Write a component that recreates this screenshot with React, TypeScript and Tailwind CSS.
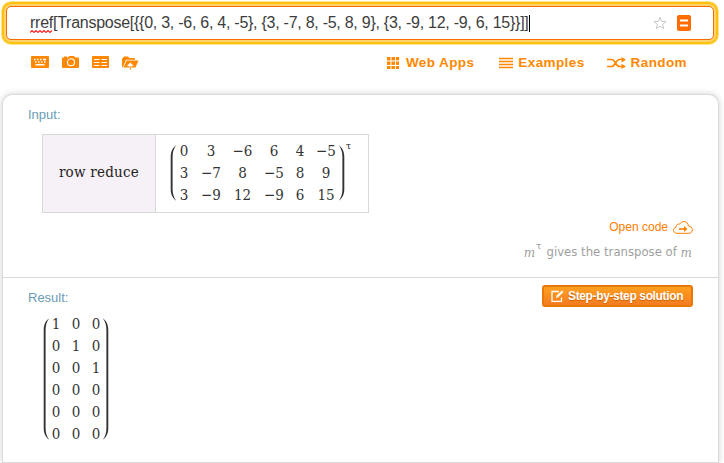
import React from "react";

const ORANGE = "#ff8800";

const inputMatrix = [
  ["0", "3", "−6", "6", "4", "−5"],
  ["3", "−7", "8", "−5", "8", "9"],
  ["3", "−9", "12", "−9", "6", "15"],
];

const resultMatrix = [
  [1, 0, 0],
  [0, 1, 0],
  [0, 0, 1],
  [0, 0, 0],
  [0, 0, 0],
  [0, 0, 0],
];

const mathFont = "font-['DejaVu_Serif_Condensed','DejaVu_Serif',serif] [font-stretch:condensed]";

function Paren({ height, right = false }: { height: number; right?: boolean }) {
  const h = height;
  return (
    <svg width="7" height={h} viewBox={`0 0 7 ${h}`} className={right ? "shrink-0 -scale-x-100" : "shrink-0"}>
      <path
        d={`M6.2 0.3C3 2.5 0.7 6 0.7 12V${h - 12}C0.7 ${h - 6} 3 ${h - 2.5} 6.2 ${h - 0.3}C3.8 ${h - 3.5} 2.6 ${h - 7} 2.6 ${h - 12}V12C2.6 7 3.8 3.5 6.2 0.3Z`}
        fill="#333"
      />
    </svg>
  );
}

function KeyboardIcon() {
  return (
    <svg width="18" height="12" viewBox="0 0 18 12">
      <rect width="18" height="12" rx="1" fill={ORANGE} />
      <path d="M3 3.500h1.500M6 3.500h1.500M9 3.500h1.500M12 3.500h3M4 6h1.500M7 6h1.500M10 6h1.500M13 6h1.500M4.500 8.700h9" stroke="#fff" strokeWidth="1.400" />
    </svg>
  );
}

function CameraIcon() {
  return (
    <svg width="17" height="12" viewBox="0 0 17 12">
      <path d="M1 1.500h1V.6h3v.9h1L7 0h5l1 1.500h3a1 1 0 0 1 1 1V11a1 1 0 0 1-1 1H1a1 1 0 0 1-1-1V2.500a1 1 0 0 1 1-1Z" fill={ORANGE} />
      <circle cx="9" cy="6.300" r="3.500" fill="none" stroke="#fff" strokeWidth="1.100" />
    </svg>
  );
}

function TableIcon() {
  return (
    <svg width="17" height="12" viewBox="0 0 17 12">
      <rect width="17" height="12" rx="1" fill={ORANGE} />
      <path d="M2 3.500h5.500M9.500 3.500H15M2 6.500h5.500M9.500 6.500H15M2 9.500h5.500M9.500 9.500H15" stroke="#fff" strokeWidth="1.200" />
    </svg>
  );
}

function UploadIcon() {
  return (
    <svg width="17" height="14" viewBox="0 0 17 14">
      <path d="M0 10.500V3L2 .5h4L7.500 2H13v1.700H4L.8 11.500Z" fill={ORANGE} />
      <path d="M4.700 4.500H16.500L13.500 11.500H1.500Z" fill={ORANGE} />
      <path d="M8.300 6.800l2.900 2.900H9.100V13.500H7.500V9.700H5.400Z" fill="#fff" stroke="#fff" strokeWidth=".6" />
      <path d="M7.700 10.500h1.200v3H7.700Z" fill={ORANGE} />
    </svg>
  );
}

function GridIcon() {
  return (
    <svg width="12" height="12" viewBox="0 0 12 12" fill={ORANGE}>
      {[0, 4.5, 9].map((y) => [0, 4.5, 9].map((x) => <rect key={`${x}-${y}`} x={x} y={y} width="3.500" height="3.400" />))}
    </svg>
  );
}

function ListIcon() {
  return (
    <svg width="14" height="12" viewBox="0 0 14 12">
      <path d="M0 1.500h14M0 4.500h14M0 7.500h14M0 10.500h14" stroke={ORANGE} strokeWidth="1.300" />
    </svg>
  );
}

function ShuffleIcon() {
  return (
    <svg width="19" height="12" viewBox="0 0 19 12">
      <path d="M0 2.500h4.500c4 0 4 7 8 7H15M0 9.500h4.500c4 0 4-7 8-7H15" fill="none" stroke={ORANGE} strokeWidth="1.600" />
      <path d="M14.500 0l4.500 2.700-4.500 2.800ZM14.500 6.700L19 9.500 14.500 12Z" fill={ORANGE} />
    </svg>
  );
}

export default function App() {
  return (
    <div className="h-[463px] w-[724px] overflow-hidden bg-white font-['Liberation_Sans',Arial,sans-serif]">
      <header className="h-[94px] pl-[6px] pt-[6px]">
        <div className="flex h-[34px] w-[708px] items-center rounded-[5px] border border-[#f96a00] bg-white pl-[23px] pr-[22px] shadow-[0_0_0_2px_#ffd36b,0_0_0_4px_#ffc20e,0_0_0_5px_#ffe592]">
          <div className="flex grow items-center whitespace-pre text-[16px] leading-[20px] tracking-[-0.26px] text-[#3d3d3d]">
            <span className="flex flex-col">
              rref
              <svg width="23" height="3" viewBox="0 0 23 3" className="-mt-[3px]">
                <path d="M0 2.500L2 .5l2 2 2-2 2 2 2-2 2 2 2-2 2 2 2-2 2 2 2-2" fill="none" stroke="#f22" strokeWidth="1.100" />
              </svg>
            </span>
            <span>{"[Transpose[{{0, 3, -6, 6, 4, -5}, {3, -7, 8, -5, 8, 9}, {3, -9, 12, -9, 6, 15}}]]"}</span>
            <span className="h-[17px] w-px bg-black" />
          </div>
          <svg width="14" height="14" viewBox="0 0 14 14" className="mr-[10px]">
            <path d="M7 1.200l1.600 4.200 4.400.2-3.400 2.800 1.100 4.200L7 10.300l-3.700 2.300 1.100-4.200L1 5.600l4.400-.2Z" fill="none" stroke="#c8c8c8" />
          </svg>
          <svg width="14" height="16" viewBox="0 0 14 16">
            <rect width="14" height="16" rx="2" fill="#ff6d00" />
            <path d="M3 5.500h8M3 10.500h8" stroke="#fff" strokeWidth="2" />
          </svg>
        </div>
        <nav className="mt-[13px] flex h-[20px] items-center pl-[25px] pr-[37px] text-[13.5px] font-bold tracking-[0.4px] text-[#ff8800]">
          <div className="flex items-start gap-[13px]">
            <KeyboardIcon /><CameraIcon /><TableIcon /><UploadIcon />
          </div>
          <div className="ml-auto flex items-center">
            <GridIcon /><span className="ml-[7px]">Web Apps</span>
            <span className="ml-[25px]"><ListIcon /></span><span className="ml-[5px]">Examples</span>
            <span className="ml-[22px]"><ShuffleIcon /></span><span className="ml-[5px]">Random</span>
          </div>
        </nav>
      </header>

      <main className="ml-[2px] h-[369px] w-[717px] rounded-t-[10px] border-x border-t border-[#dadada] bg-white shadow-[0_0_7px_rgba(0,0,0,0.18)]">
        <section className="h-[183px] border-b border-[#dadada] pl-[25px] pr-[25px] pt-[12px]">
          <h2 className="h-[16px] text-[13px] leading-[16px] text-[#6b9cb5]">Input:</h2>
          <div className="ml-[14px] mt-[11px] flex h-[79px] w-[327px] border border-[#d8d8d8]">
            <div className={`flex w-[113px] items-center justify-center border-r border-[#d8d8d8] bg-[#f6f1f6] pb-[2px] text-[15px] tracking-[0.25px] text-[#222] ${mathFont}`}>row reduce</div>
            <div className="flex pl-[14px] pt-[10px]">
              <Paren height={56} />
              <div className={`-ml-[2px] -mt-[5px] grid h-[66px] grid-cols-[18px_36px_27px_36px_16px_36px] text-center text-[15px] leading-[22px] text-[#333] ${mathFont}`}>
                {inputMatrix.flat().map((v, i) => <span key={i} className="flex justify-center">{v}</span>)}
              </div>
              <span className="-ml-[6px]"><Paren height={56} right /></span>
              <span className={`-mt-[5px] ml-px text-[10px] leading-[12px] text-[#222] ${mathFont}`}>τ</span>
            </div>
          </div>
          <div className="mt-[5px] flex h-[18px] items-center justify-end text-[12px] text-[#ff7d00]">
            Open code
            <svg width="20" height="13" viewBox="0 0 20 13" className="ml-[5px]" fill="none" stroke="#ff7d00">
              <path d="M4 12.300C1.500 12.300.6 11 .6 9.300c0-1.700 1-2.700 2.400-3C3 3.500 5 2.500 6.500 3.300 7.500 1.300 9.200.6 11 .6c2.700 0 4.300 2 4.300 4.400 2.600.2 4 1.700 4 3.800 0 2.300-1.300 3.500-3.500 3.500Z" />
              <path d="M6 8h6" strokeWidth="1.600" /><path d="m11 5 3.500 3L11 11Z" fill="#ff7d00" stroke="none" />
            </svg>
          </div>
          <div className="mt-[7px] flex h-[20px] items-center justify-end whitespace-pre pr-px font-['DejaVu_Sans',sans-serif] text-[11.7px] text-[#a0a0a0]">
            <i className="font-['DejaVu_Serif',serif] text-[12px]">m</i>
            <span className="-mt-[12px] ml-px text-[9px]">τ</span>
            <span className="ml-[5px]">gives the transpose of </span>
            <i className="font-['DejaVu_Serif',serif] text-[12px]">m</i>
          </div>
        </section>
        <section className="h-[185px] border-b border-[#dadada] pl-[25px] pr-[25px] pt-[7px]">
          <div className="flex h-[22px] items-start justify-between">
            <h2 className="mt-[5px] text-[13px] leading-[16px] text-[#6b9cb5]">Result:</h2>
            <button className="flex h-[22px] w-[151px] items-center justify-start rounded-[3px] border-2 border-[#e87809] bg-linear-to-b from-[#ff9f20] to-[#f47c20] pl-[7px] text-[12px] font-bold tracking-[-0.36px] text-white [text-shadow:0_1px_1px_#c86000]">
              <svg width="13" height="12" viewBox="0 0 13 12" className="mr-[4px] shrink-0" fill="none" stroke="#fff">
                <path d="M8 1.500H1v10h9.500V7.500" strokeWidth="1.300" /><path d="M5 8l.6-2.400L11 .5l1.500 1.500-5.300 5.200Z" fill="#fff" stroke="none" />
              </svg>
              <span className="whitespace-nowrap">Step-by-step solution</span>
            </button>
          </div>
          <div className="ml-[15px] mt-[11px] flex h-[122px]">
            <Paren height={122} />
            <div className={`-ml-[4px] -mt-[5px] grid h-[132px] grid-cols-[20px_20px_20px] text-center text-[15px] leading-[22px] text-[#333] ${mathFont}`}>
              {resultMatrix.flat().map((v, i) => <span key={i}>{v}</span>)}
            </div>
            <span className="-ml-[4px]"><Paren height={122} right /></span>
          </div>
        </section>
      </main>
    </div>
  );
}
